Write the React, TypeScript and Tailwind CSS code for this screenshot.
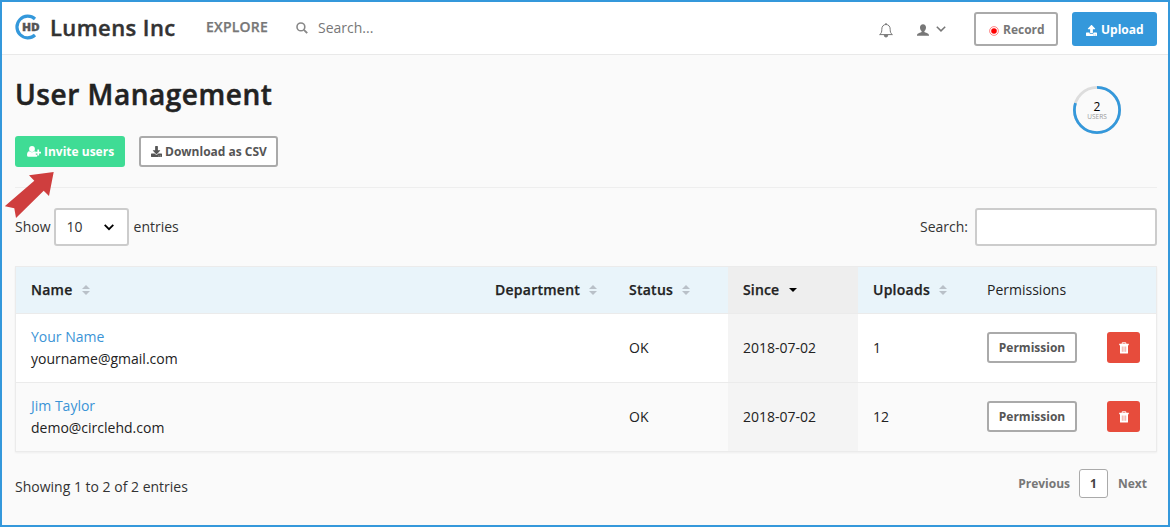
import React from "react";
import { FaDownload, FaUpload } from "react-icons/fa";

function Logo() {
  return (
    <svg width="26" height="26" viewBox="0 0 26 26" className="block shrink-0">
      <path d="M20 5A10.8 10.8 0 1 0 20 21" fill="none" stroke="#3498db" strokeWidth="3.2" />
      <text x="7" y="16.800" fontSize="10.500" fontWeight="800" fill="#555" stroke="#555" strokeWidth=".3" textLength="17.800" lengthAdjust="spacingAndGlyphs" fontFamily="Open Sans, sans-serif">
        HD
      </text>
    </svg>
  );
}

function SearchIcon() {
  return (
    <svg width="12" height="12" viewBox="0 0 12 12" fill="none" stroke="#888" className="block shrink-0">
      <circle cx="4.9" cy="4.9" r="3.9" strokeWidth="1.6" />
      <path d="M7.9 7.9L11.2 11.2" strokeWidth="1.9" />
    </svg>
  );
}

function BellIcon() {
  return (
    <svg width="14" height="15" viewBox="0 0 14 15" fill="none" stroke="#777" strokeWidth="1" className="block shrink-0">
      <path d="M.6 11.6C2.6 10.3 2.8 8.6 2.8 6.3 2.8 3.4 4.5 1.5 7 1.5S11.2 3.4 11.2 6.3C11.2 8.6 11.4 10.3 13.4 11.6Z" />
      <path d="M7 .2V1.5" strokeWidth="1.6" />
      <path d="M5.3 12.3a1.7 1.7 0 0 0 3.4 0Z" fill="#777" />
    </svg>
  );
}

function UserIcon() {
  return (
    <svg width="12" height="12" viewBox="0 0 12 12" fill="#777" className="block shrink-0">
      <path d="M6 .2C7.900 .2 9 1.500 9 3.400 9 4.900 8.400 6.200 7.400 7V7.900C8.300 8.600 11.800 8.900 12 11V11.800H0V11C.2 8.900 3.700 8.600 4.600 7.900V7C3.600 6.200 3 4.900 3 3.400 3 1.500 4.100 .2 6 .2Z" />
    </svg>
  );
}

function UserPlusIcon() {
  return (
    <svg width="14" height="11" viewBox="0 0 14 11" fill="#fff" className="mr-[3px] block shrink-0">
      <circle cx="5" cy="3" r="2.900" />
      <path d="M2.400 5.300C3.800 6.700 6.200 6.700 7.600 5.300 8.100 5.300 8.500 5.500 8.800 5.900V8.700H10.300V10.200Q9.800 10.800 9 10.800H1.600Q0 10.800 0 9.200C0 7.200 .6 5.300 2.400 5.300Z" />
      <path d="M10.400 3.600H12.100V5.700H14V7.400H12.100V9.500H10.400V7.400H8.300V5.700H10.400Z" />
    </svg>
  );
}

function TrashIcon() {
  return (
    <svg width="10" height="12" viewBox="0 0 10 12" className="block">
      <path d="M3.2 1.900V.8H6.800V1.900" fill="none" stroke="#fff" strokeWidth="1" />
      <path d="M.2 1.700H9.800V3.200H.2ZM1 3.200H9V11Q9 11.600 8.400 11.600H1.600Q1 11.600 1 11Z" fill="#fff" />
      <path d="M3.300 4.500V9.800M5 4.500V9.800M6.700 4.500V9.800" stroke="#e74c3c" strokeWidth=".7" opacity=".65" />
    </svg>
  );
}

function SortIcon() {
  return (
    <svg width="8" height="10" viewBox="0 0 8 10" fill="#b9c0c8" className="ml-[9px] block">
      <path d="M4 0L8 4H0ZM0 6H8L4 10Z" />
    </svg>
  );
}

function Heading({ label }: { label: string }) {
  return (
    <th className="pl-[15.5px] text-left font-semibold tracking-[0.25px] first:pl-[15px] [-webkit-text-stroke:0.25px]">
      <div className="flex items-center">
        {label}
        <SortIcon />
      </div>
    </th>
  );
}

const users = [
  { name: "Your Name", email: "yourname@gmail.com", status: "OK", since: "2018-07-02", uploads: 1 },
  { name: "Jim Taylor", email: "demo@circlehd.com", status: "OK", since: "2018-07-02", uploads: 12 },
];

export default function App() {
  return (
    <div className="relative h-[527px] w-[1170px] overflow-hidden border-2 border-[#3498db] bg-[#fafafa] font-['Open_Sans',sans-serif] text-sm text-[#222]">
      <header className="flex h-[53px] items-center border-b border-[#e9e9e9] bg-white pr-[11px] pl-[13px]">
        <div className="-mt-[3px]"><Logo /></div>
        <div className="ml-[9px] w-[156px] text-[22px] font-semibold tracking-[0.4px] whitespace-nowrap text-[#333] [-webkit-text-stroke:0.4px]">Lumens Inc</div>
        <div className="-mt-[3px] w-[90px] text-sm font-semibold tracking-[0.2px] text-[#777] [-webkit-text-stroke:0.25px]">EXPLORE</div>
        <SearchIcon />
        <div className="ml-[10px] text-[#777]">Search...</div>
        <div className="ml-auto flex items-center pt-[2px]">
          <div className="mt-[2px]"><BellIcon /></div>
          <div className="mt-[2px] ml-[24px]"><UserIcon /></div>
          <svg width="10" height="6" viewBox="0 0 10 6" fill="none" stroke="#777" strokeWidth="1.500" className="-mt-[1px] ml-[7px]">
            <path d="M.8 .7L5 4.900L9.200 .7" />
          </svg>
          <button className="ml-[28px] flex h-[34px] w-[84px] items-center rounded-[3px] border-2 border-[#aaa] bg-white pt-[2px] pl-[13px] text-xs font-bold text-[#777]">
            <svg width="10" height="10" viewBox="0 0 10 10" className="mt-[1px] mr-[4px] shrink-0">
              <circle cx="5" cy="5" r="4.400" fill="none" stroke="#f55" strokeWidth=".7" />
              <circle cx="5" cy="5" r="2.800" fill="red" />
            </svg>
            Record
          </button>
          <button className="ml-[14px] flex h-[34px] w-[85px] items-center rounded-[3px] bg-[#3498db] pt-[2px] pl-[14px] text-xs font-bold text-white">
            <FaUpload size={11} className="mt-[1px] mr-[4px] shrink-0" />
            Upload
          </button>
        </div>
      </header>

      <main className="px-[13px] pr-[11px]">
        <section className="flex h-[133px] justify-between border-b border-[#eee]">
          <div>
            <h1 className="pt-[19px] text-[28px] leading-10 font-semibold tracking-[0.53px] [-webkit-text-stroke:0.5px]">User Management</h1>
            <div className="mt-[22px] flex">
              <button className="flex h-[31px] w-[110px] items-center rounded-[3px] bg-[#3fdc95] pl-[12px] text-xs font-bold whitespace-nowrap text-white">
                <UserPlusIcon />
                Invite users
              </button>
              <button className="ml-[14px] flex h-[31px] w-[139px] items-center rounded-[3px] border-2 border-[#aaa] bg-white pl-[10px] text-xs font-bold whitespace-nowrap text-[#555]">
                <FaDownload size={11} className="mr-[3px] shrink-0" />
                Download as CSV
              </button>
            </div>
          </div>
          <div className="mt-[31px] mr-[36px] grid size-[48px] place-items-center">
            <svg viewBox="0 0 48 48" className="col-start-1 row-start-1 size-[48px]" fill="none" strokeWidth="2.800">
              <circle cx="24" cy="24" r="22.600" stroke="#ddd" />
              <circle cx="24" cy="24" r="22.600" stroke="#3498db" pathLength="100" strokeDasharray="80 20" transform="rotate(-90 24 24)" />
            </svg>
            <div className="col-start-1 row-start-1 text-center">
              <div className="mt-[1px] text-xs leading-[13px] text-black">2</div>
              <div className="text-[6.500px] leading-[8px] text-[#999]">USERS</div>
            </div>
          </div>
        </section>

        <section className="mt-[20px] flex h-[38px] items-center text-[#333]">
          Show
          <div className="mr-[5px] ml-[3px] flex h-[38px] w-[75px] items-center justify-between rounded-[3px] border-2 border-[#ccc] bg-white pr-[13px] pl-[11px]">
            10
            <svg width="10" height="7" viewBox="0 0 10 7" fill="none" stroke="#000" strokeWidth="1.800">
              <path d="M.7 .9L5 5.200L9.300 .9" />
            </svg>
          </div>
          entries
          <div className="ml-auto">Search:</div>
          <input aria-label="Search" className="ml-[7px] h-[38px] w-[182px] rounded-[3px] border-2 border-[#ccc] bg-white px-2 outline-none" />
        </section>

        <table className="mt-[20px] w-[1141px] table-fixed border-collapse border border-[#ebebeb] shadow-[0_1px_2px_rgba(0,0,0,0.05)]">
          <colgroup>
            <col className="w-[464px]" />
            <col className="w-[134px]" />
            <col className="w-[114px]" />
            <col className="w-[130px]" />
            <col className="w-[114px]" />
            <col className="w-[120px]" />
            <col className="w-[65px]" />
          </colgroup>
          <thead>
            <tr className="h-[47px] border-b border-[#ebebeb] bg-[#e9f4fa]">
              <Heading label="Name" />
              <Heading label="Department" />
              <Heading label="Status" />
              <th className="bg-[#eee] pl-[15.5px] text-left font-semibold tracking-[0.15px] [-webkit-text-stroke:0.25px]">
                <div className="flex items-center">
                  Since
                  <svg width="8" height="4" viewBox="0 0 8 4" className="ml-[10px]"><path d="M0 0H8L4 4Z" /></svg>
                </div>
              </th>
              <Heading label="Uploads" />
              <th className="pl-[15.5px] text-left font-normal">Permissions</th>
              <th />
            </tr>
          </thead>
          <tbody>
            {users.map((user) => (
              <tr key={user.email} className="h-[69px] border-b border-[#ebebeb] odd:bg-white">
                <td className="px-[15px] leading-[22px]">
                  <a className="block text-[#3b94d6]">{user.name}</a>
                  {user.email}
                </td>
                <td />
                <td className="pl-[15.5px]">{user.status}</td>
                <td className="bg-[#f4f4f4] pl-[15.5px]">{user.since}</td>
                <td className="pl-[15.5px]">{user.uploads}</td>
                <td className="px-[15px]">
                  <button className="mb-[2px] block h-[31px] w-[90px] rounded-[3px] border-2 border-[#aaa] bg-white pt-[1px] pl-[1px] text-xs font-bold text-[#555]">Permission</button>
                </td>
                <td className="pl-[15px]">
                  <button aria-label="Delete" className="mb-[2px] flex h-[31px] w-[33px] items-center justify-center rounded-[3px] bg-[#e74c3c] pt-[1px] pl-[1px]"><TrashIcon /></button>
                </td>
              </tr>
            ))}
          </tbody>
        </table>

        <footer className="flex items-start pt-[17px] text-[#333]">
          <div className="mt-[8px]">Showing 1 to 2 of 2 entries</div>
          <div className="mr-[10px] ml-auto flex h-[29px] items-center text-xs font-bold text-[#777]">
            Previous
            <div className="mr-[10px] ml-[9px] flex h-[29px] w-[29px] items-center justify-center rounded-[3px] border border-[#aaa] bg-white text-[#444]">1</div>
            Next
          </div>
        </footer>
      </main>

      <svg width="49" height="46" viewBox="0 0 49 46" className="absolute top-[170px] left-[3px]">
        <path d="M48.700 0L24 3.300 29.300 8.700 -.3 34.300 9.300 36.300 11 46 38.700 18.700 44 24Z" fill="#cf3e3e" />
      </svg>
    </div>
  );
}
